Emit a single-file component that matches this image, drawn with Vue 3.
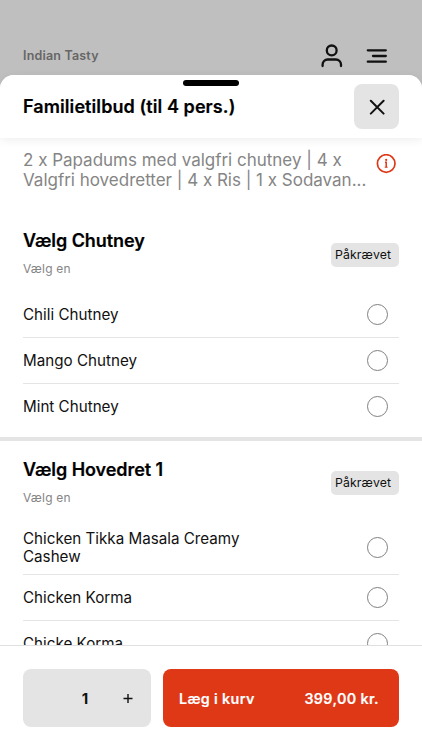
<script setup>
import { ref } from 'vue'

const quantity = ref(1)
const groups = [
  {
    title: 'Vælg Chutney',
    options: [
      { name: 'Chili Chutney' },
      { name: 'Mango Chutney' },
      { name: 'Mint Chutney' },
    ],
  },
  {
    title: 'Vælg Hovedret 1',
    options: [
      { name: 'Chicken Tikka Masala Creamy Cashew', tall: true },
      { name: 'Chicken Korma' },
      { name: 'Chicke Korma' },
    ],
  },
]
</script>

<template>
  <div class="screen">
    <header class="topbar">
      <span class="brand">Indian Tasty</span>
      <svg class="user" width="24" height="26" viewBox="0 0 24 26" fill="none" stroke="#111" stroke-width="2.3" stroke-linecap="round">
        <circle cx="11.700" cy="7.400" r="4.900" />
        <path d="M2.600 23v-1.500a5 5 0 0 1 5-5h8.400a5 5 0 0 1 5 5V23" />
      </svg>
      <svg class="burger" width="22" height="18" viewBox="0 0 22 18" fill="none" stroke="#111" stroke-width="2.300" stroke-linecap="round">
        <path d="M1.800 3.300h18M7 9h12.800M1.800 14.700h18" />
      </svg>
    </header>

    <main class="sheet">
      <div class="sheet-head">
        <i class="handle"></i>
        <h1>Familietilbud (til 4 pers.)</h1>
        <button class="close" aria-label="Luk">
          <svg width="16" height="16" viewBox="0 0 16 16" fill="none" stroke="#111" stroke-width="2" stroke-linecap="round">
            <path d="M1.800 1.800l12.800 12.800M14.600 1.800l-12.800 12.800" />
          </svg>
        </button>
      </div>

      <div class="content">
        <div class="summary">
          <p>2 x Papadums med valgfri chutney | 4 x<br />Valgfri hovedretter | 4 x Ris | 1 x Sodavan...</p>
          <svg class="info" width="20" height="20" viewBox="0 0 20 20" fill="none">
            <circle cx="10.200" cy="9.500" r="8.800" stroke="#df3817" stroke-width="1.700" />
            <circle cx="10.200" cy="5.900" r="1.100" fill="#df3817" />
            <path d="M9 8.300h1.200v5" stroke="#df3817" stroke-width="1.500" />
            <path d="M8.700 13.200h3" stroke="#df3817" stroke-width="1" />
          </svg>
        </div>

        <section v-for="group in groups" :key="group.title" class="group">
          <div class="group-head">
            <div>
              <h2>{{ group.title }}</h2>
              <p class="hint">Vælg en</p>
            </div>
            <span class="badge">Påkrævet</span>
          </div>
          <ul>
            <li v-for="option in group.options" :key="option.name" :class="{ tall: option.tall }">
              <span class="name">{{ option.name }}</span>
              <i class="radio"></i>
            </li>
          </ul>
        </section>
      </div>

      <footer class="actions">
        <div class="stepper">
          <span></span>
          <b>{{ quantity }}</b>
          <button class="plus" aria-label="Tilføj" @click="quantity++">
            <svg width="10" height="10" viewBox="0 0 10 10" stroke="#111" stroke-width="1.400"><path d="M.5 5.500h9M5 1v9" /></svg>
          </button>
        </div>
        <button class="buy"><span class="label">Læg i kurv</span><span class="price">399,00 kr.</span></button>
      </footer>
    </main>
  </div>
</template>

<style>
body { margin: 0; overflow: hidden; }
</style>

<style scoped>
* { box-sizing: border-box; }
h1, h2, p, ul { margin: 0; padding: 0; }
button { border: 0; padding: 0; font: inherit; color: inherit; }
svg { display: block; flex: none; }

.screen {
  height: 750px;
  display: flex;
  flex-direction: column;
  background: #bfbfbf;
  color: #111;
  font-family: Inter, "Liberation Sans", sans-serif;
  overflow: hidden;
}
.topbar { height: 75px; flex: none; display: flex; align-items: flex-start; padding: 43px 34px 0 23px; }
.brand { flex: 1; margin-top: 5px; font-size: 12.500px; line-height: 16px; font-weight: 600; letter-spacing: .18px; color: #666; }
.burger { margin: 4px 0 0 22px; }

.sheet { flex: 1; min-height: 0; display: flex; flex-direction: column; background: #fff; border-radius: 14px 14px 0 0; }
.sheet-head {
  position: relative;
  z-index: 1;
  height: 63px;
  flex: none;
  display: flex;
  align-items: flex-start;
  justify-content: space-between;
  padding: 9px 23px 0;
  background: #fff;
  border-radius: 14px 14px 0 0;
  box-shadow: 0 2px 10px rgba(0, 0, 0, .07);
}
.handle { position: absolute; top: 4.500px; left: 183px; width: 56px; height: 6px; border-radius: 3px; background: #000; }
h1 { margin-top: 11px; font-size: 18px; line-height: 24px; font-weight: 600; letter-spacing: .08px; color: #000; white-space: nowrap; -webkit-text-stroke: .2px #000; }
.close { width: 45px; height: 45px; display: grid; place-items: center; border-radius: 8px; background: #e4e4e4; }

.content { flex: 1; min-height: 0; overflow: hidden; }
.summary { height: 82px; display: flex; align-items: flex-start; padding: 12px 26px 0 23px; }
.summary p { flex: 1; font-size: 17px; line-height: 20px; letter-spacing: -.01px; color: #858585; white-space: nowrap; }
.info { margin-top: 4px; }

.group-head { height: 72px; display: flex; justify-content: space-between; padding: 0 23px; }
h2 { margin-top: 9px; font-size: 18px; line-height: 24px; font-weight: 600; letter-spacing: -.07px; color: #000; -webkit-text-stroke: .2px #000; }
.hint { margin-top: 8px; font-size: 12px; line-height: 16px; letter-spacing: .2px; color: #858585; }
.badge { margin-top: 23px; width: 68px; height: 24px; padding-left: 4px; border-radius: 5px; background: #e4e4e4; font-size: 12.300px; line-height: 24px; letter-spacing: .1px; }
ul { list-style: none; padding: 0 23px; }
li { height: 46px; display: flex; align-items: center; justify-content: space-between; padding-right: 11px; border-bottom: 1px solid #e4e4e4; }
.group li:last-child { border-bottom-color: transparent; }
.tall { height: 54px; }
.name { width: 240px; font-size: 15.200px; line-height: 18px; }
.radio { width: 21px; height: 21px; border: 1px solid #808080; border-radius: 50%; }
.group:not(:last-child) { height: 221px; border-bottom: 4px solid #e4e4e4; }
.group + .group { padding-top: 8px; }
.group + .group .badge { margin-top: 22px; }

.actions { height: 105px; flex: none; display: flex; gap: 12px; align-items: flex-start; padding: 23px 23px 0; border-top: 1px solid #e0e0e0; background: #fff; }
.stepper { width: 128px; height: 58px; display: grid; grid-template-columns: 44px 36px 48px; align-items: center; border-radius: 8px; background: #e4e4e4; }
.stepper b { text-align: center; font-size: 15px; font-weight: 700; }
.plus { width: 10px; margin-left: 20px; background: none; }
.buy { flex: 1; height: 58px; display: flex; align-items: center; justify-content: space-between; padding: 0 20px 0 16px; border-radius: 8px; background: #df3817; color: #fff; font-size: 14.300px; font-weight: 600; letter-spacing: .35px; -webkit-text-stroke: .15px #fff; }
</style>
